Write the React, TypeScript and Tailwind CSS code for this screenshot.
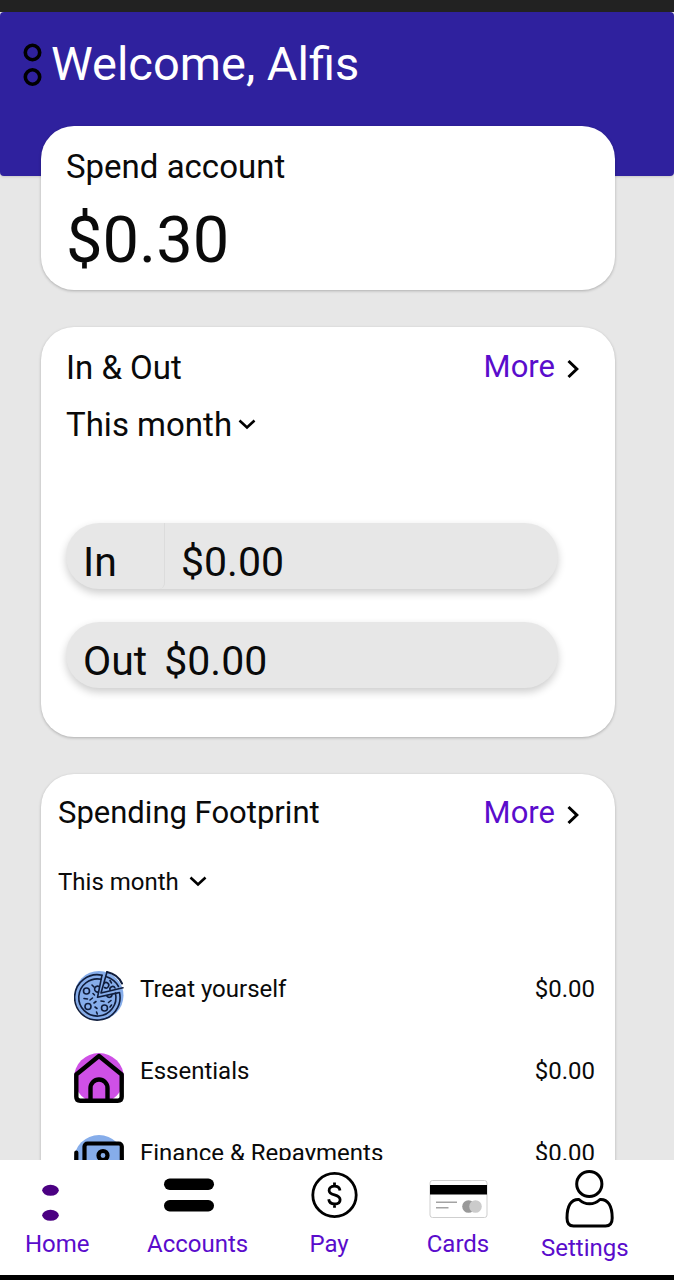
import { useState } from "react";
import type { ReactNode } from "react";

const PERIODS = ["This month", "Last month", "This year"];

function MenuDots() {
  return (
    <svg width="22" height="48" viewBox="0 0 22 48" fill="none" stroke="#000" strokeWidth="3.6" aria-hidden="true">
      <circle cx="10.500" cy="12.500" r="7.200" />
      <circle cx="10.500" cy="37" r="7.200" />
    </svg>
  );
}

function PizzaIcon() {
  return (
    <svg width="50" height="50" viewBox="0 0 50 50" fill="none" stroke="#101d3c" strokeWidth="1.6" strokeLinecap="round" strokeLinejoin="round" aria-hidden="true">
      <circle cx="25" cy="24.500" r="24.500" fill="#86adea" stroke="none" />
      <path d="M28 4.200A22.700 22.700 0 1 0 45.500 21.500L41.500 22.400" />
      <path d="M27.300 8.300A18.600 18.600 0 1 0 41.500 22.400" />
      <path d="M28 4.200L23.500 26.300L41.500 22.400" />
      <path d="M33 1L27 22L49 16.800" />
      <path d="M33 1C40 2.500 45.500 7 48 12.500" strokeWidth="2" />
      <path d="M32 5.500C38 7.500 42 10.800 44.500 15.500" />
      <circle cx="12.500" cy="20" r="3" />
      <circle cx="14" cy="35.500" r="3" />
      <circle cx="30.500" cy="37" r="3" />
      <path d="M25 15.500A3 3 0 1 0 24.500 21" />
      <path d="M30 12.500A2.700 2.700 0 1 1 30.500 16.500" />
      <path d="M36 19A2.700 2.700 0 0 1 41 17" />
      <path d="M33 25.200A2.800 2.800 0 0 0 38 24" />
      <path d="M18 14l2 2M10 27.500l3.500.5M18.500 27l-2.500 2M22 30.500l-2 1.500M21 36l2 1.500M22.500 41l.8 2M27 30l3 .5M37 29.500l-2.500 2M37.500 34l-1.500 2M19 22.500l1.500 1.500M36 9.500l1.500 2.500" />
    </svg>
  );
}

function HouseIcon() {
  return (
    <svg width="50" height="50" viewBox="0 0 50 50" fill="none" stroke="#000" strokeWidth="4.400" strokeLinecap="round" strokeLinejoin="round" aria-hidden="true">
      <circle cx="25" cy="25" r="25" fill="#cf50e6" stroke="none" />
      <path d="M2.300 21.500L25 3L47.700 21.500V43.700Q47.700 47.700 43.700 47.700H6.300Q2.300 47.700 2.300 43.700Z" />
      <path d="M16.500 47V35a8.500 8.500 0 0 1 17 0V47" />
    </svg>
  );
}

function BanknoteIcon() {
  return (
    <svg width="50" height="50" viewBox="0 0 50 50" fill="none" stroke="#000" strokeWidth="4.200" strokeLinecap="round" strokeLinejoin="round" aria-hidden="true">
      <circle cx="25" cy="25" r="25" fill="#86adea" stroke="none" />
      <rect x="10.500" y="8.500" width="37.300" height="25" rx="3" />
      <circle cx="29" cy="20.500" r="4.500" />
      <path d="M2.300 17.500V39.500a2 2 0 0 0 2 2H40" />
    </svg>
  );
}

function HomeIcon() {
  return (
    <svg width="64" height="64" viewBox="0 0 64 64" fill="#4b0082" aria-hidden="true">
      <ellipse cx="25.500" cy="26.300" rx="8.300" ry="5.500" />
      <ellipse cx="25.500" cy="51.300" rx="8.300" ry="5.500" />
    </svg>
  );
}

function AccountsIcon() {
  return (
    <svg className="overflow-visible" width="64" height="64" viewBox="0 0 64 64" aria-hidden="true">
      <rect x="-2" y="14.500" width="50" height="11.500" rx="5.700" />
      <rect x="-2" y="36" width="50" height="11.500" rx="5.700" />
    </svg>
  );
}

function PayIcon() {
  return (
    <svg width="64" height="64" viewBox="0 0 64 64" fill="none" stroke="#000" aria-hidden="true">
      <circle cx="37.500" cy="31" r="21.700" strokeWidth="2.800" />
      <path d="M43 26.500c-.5-3-2.600-4.300-5.500-4.300-3.200 0-5.400 1.700-5.400 4.200 0 6 11 3 11 9.300 0 2.700-2.300 4.300-5.600 4.300-3.300 0-5.400-1.600-5.800-4.700M37.500 18.500v4M37.500 39.700v4" strokeWidth="2.800" />
    </svg>
  );
}

function CardsIcon() {
  return (
    <svg width="64" height="64" viewBox="0 0 64 64" aria-hidden="true">
      <rect x="4" y="16.500" width="57" height="37" rx="2.500" fill="#fff" stroke="#cfcfcf" />
      <rect x="4" y="21" width="57" height="9.500" />
      <path d="M10 38.300h21M10 43.800h12.500" stroke="#a3a3a3" strokeWidth="1.600" />
      <circle cx="42.500" cy="42.500" r="6.300" fill="#999" />
      <circle cx="49.500" cy="42.500" r="6.300" fill="#cbcbcb" />
    </svg>
  );
}

function SettingsIcon() {
  return (
    <svg width="64" height="68" viewBox="0 0 64 68" fill="none" stroke="#000" strokeWidth="3" strokeLinejoin="round" aria-hidden="true">
      <circle cx="36.300" cy="20" r="12.600" />
      <path d="M26 35.500C29 38.300 32.500 39.800 36.500 39.800S44 38.300 47 35.500C55 35 59.200 42 59.200 54C59.200 59.500 57 62 52.500 62H20.500C16 62 14 59.500 14 54C14 42 18 35 26 35.500Z" />
    </svg>
  );
}

function PeriodSelect({ label, small = false }: { label: string; small?: boolean }) {
  const [period, setPeriod] = useState(PERIODS[0]);
  return (
    <div className="flex items-center">
      <select
        aria-label={label}
        value={period}
        onChange={(event) => setPeriod(event.target.value)}
        className={
          small
            ? "-mr-[18px] appearance-none bg-transparent pr-7 text-2xl leading-8 [field-sizing:content]"
            : "-mr-[18px] appearance-none bg-transparent pr-6 text-[33px] leading-[40px] [field-sizing:content]"
        }
      >
        {PERIODS.map((name) => (
          <option key={name}>{name}</option>
        ))}
      </select>
      <svg className="pointer-events-none" width="18" height="12" viewBox="0 0 18 12" fill="none" stroke="#000" strokeWidth="2.600" aria-hidden="true">
        <path d="M1.500 1.500L9 8.500L16.500 1.500" />
      </svg>
    </div>
  );
}

function MoreLink({ href }: { href: string }) {
  return (
    <a href={href} className="flex items-center gap-3 text-[31px] leading-[38px] text-[#5a0ccc]">
      More
      <svg className="mt-1" width="12" height="20" viewBox="0 0 12 20" fill="none" stroke="#000" strokeWidth="3" aria-hidden="true">
        <path d="M1.500 2L9.800 10L1.500 18" />
      </svg>
    </a>
  );
}

function SpendingRow({ icon, name, amount }: { icon: ReactNode; name: string; amount: string }) {
  return (
    <li className="flex items-start gap-4">
      {icon}
      <span className="flex-1 pt-0.5 text-2xl leading-8">{name}</span>
      <span className="pt-0.5 text-2xl leading-8">{amount}</span>
    </li>
  );
}

function NavItem({ icon, label }: { icon: ReactNode; label: string }) {
  return (
    <a href={`#${label.toLowerCase()}`} className="flex w-fit flex-col items-center">
      {icon}
      <span className="text-2xl leading-8">{label}</span>
    </a>
  );
}

export default function App() {
  return (
    <div className="flex h-dvh flex-col bg-[#e7e7e7] font-[Roboto,sans-serif] text-[#0a0a0a]">
      <div className="h-3 shrink-0 bg-[#222222]" />

      <main className="min-h-0 flex-1 overflow-y-auto [scrollbar-width:none]">
        <header className="flex items-center gap-[7px] rounded bg-[#2f219e] pt-6 pr-6 pb-[84px] pl-[22px] shadow-sm">
          <button type="button" aria-label="Open menu">
            <MenuDots />
          </button>
          <h1 className="text-[47px] leading-[56px] text-white">Welcome, Alfis</h1>
        </header>

        <div className="relative -mt-[50px] mr-[59px] ml-[41px] flex flex-col gap-[37px] pb-9">
          <section className="rounded-[33px] bg-white px-[25px] pt-[21px] pb-[10px] shadow-[0_1px_3px_rgba(0,0,0,0.25)]">
            <h2 className="text-[33px] leading-[40px]">Spend account</h2>
            <p className="mt-[13px] text-[65px] leading-[80px]">$0.30</p>
          </section>

          <section className="rounded-[33px] bg-white pt-[21px] pr-9 pb-[49px] pl-[25px] shadow-[0_1px_3px_rgba(0,0,0,0.25)]">
            <div className="flex items-start justify-between">
              <h2 className="text-[33px] leading-[40px]">In &amp; Out</h2>
              <MoreLink href="#in-and-out" />
            </div>
            <div className="mt-[17px]">
              <PeriodSelect label="In and out period" />
            </div>
            <dl className="mt-[78px] mr-[21px] flex flex-col gap-[33px] text-[41px] leading-[52px]">
              <div className="flex rounded-full bg-[#e7e7e7] shadow-[0_4px_9px_rgba(0,0,0,0.2)]">
                <dt className="w-[99px] rounded-br-md border-r border-[#dcdcdc] pt-[13px] pb-px pl-[17px]">In</dt>
                <dd className="pt-[13px] pb-px pl-4">$0.00</dd>
              </div>
              <div className="flex gap-[17px] rounded-full bg-[#e7e7e7] pt-[13px] pb-px pl-[17px] shadow-[0_4px_9px_rgba(0,0,0,0.2)]">
                <dt>Out</dt>
                <dd>$0.00</dd>
              </div>
            </dl>
          </section>

          <section className="rounded-[33px] bg-white pt-5 pb-10 pl-[17px] shadow-[0_1px_3px_rgba(0,0,0,0.25)]">
            <div className="flex items-center justify-between pr-9">
              <h2 className="text-[31px] leading-[38px]">Spending Footprint</h2>
              <MoreLink href="#spending" />
            </div>
            <div className="mt-[34px]">
              <PeriodSelect label="Spending period" small />
            </div>
            <ul className="mt-[73px] flex flex-col gap-8 pr-5 pl-4">
              <SpendingRow icon={<PizzaIcon />} name="Treat yourself" amount="$0.00" />
              <SpendingRow icon={<HouseIcon />} name="Essentials" amount="$0.00" />
              <SpendingRow icon={<BanknoteIcon />} name="Finance & Repayments" amount="$0.00" />
            </ul>
          </section>
        </div>
      </main>

      <nav
        aria-label="Main"
        className="grid shrink-0 grid-cols-[122fr_150fr_129fr_115fr_133fr] items-start border-b-[5px] border-black bg-white pt-1 pb-[11px] pl-[25px] text-[#5a0ccc]"
      >
        <NavItem icon={<HomeIcon />} label="Home" />
        <NavItem icon={<AccountsIcon />} label="Accounts" />
        <NavItem icon={<PayIcon />} label="Pay" />
        <NavItem icon={<CardsIcon />} label="Cards" />
        <NavItem icon={<SettingsIcon />} label="Settings" />
      </nav>
    </div>
  );
}
